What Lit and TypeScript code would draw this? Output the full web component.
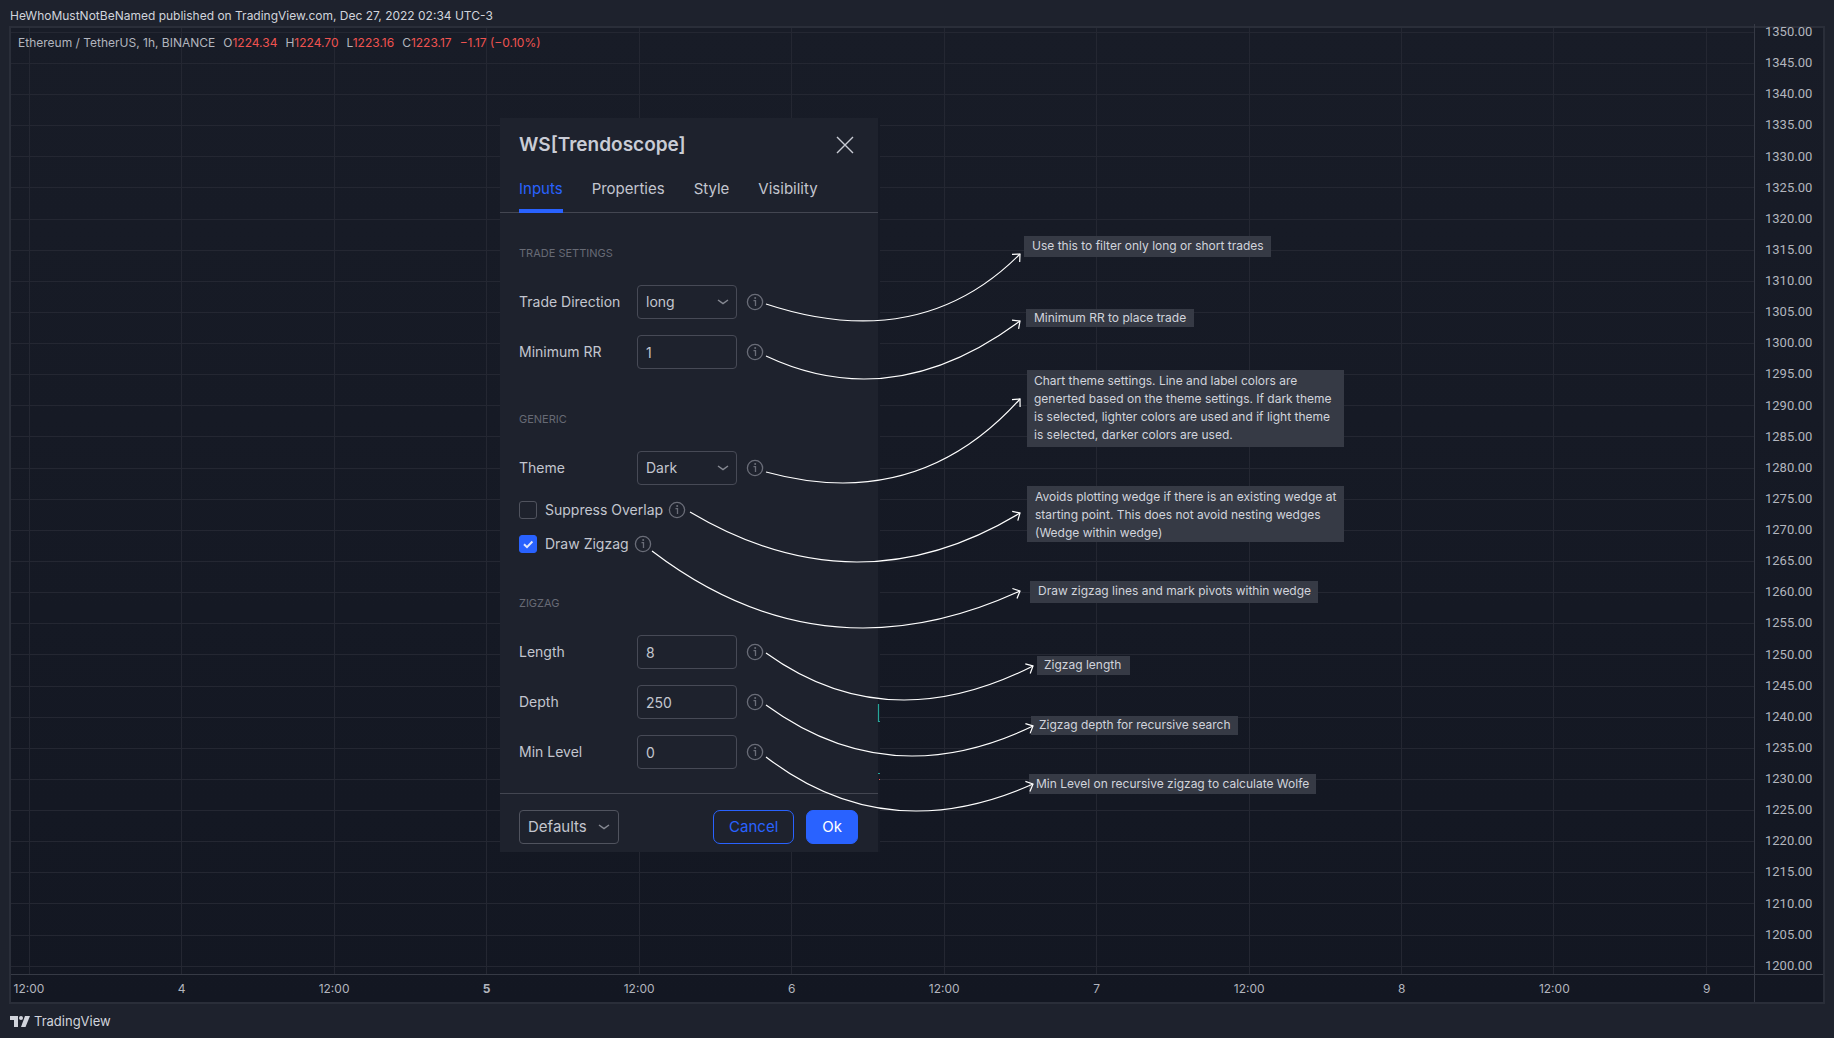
import { LitElement, html, svg, css } from "lit";
import { customElement } from "lit/decorators.js";
import { classMap } from "lit/directives/class-map.js";

type Point = [number, number];

/** Price levels, top to bottom, and times, left to right. */
const PRICES = Array.from({ length: 31 }, (_, i) => 1350 - i * 5);
const TIMES = ["12:00", "4", "12:00", "5", "12:00", "6", "12:00", "7", "12:00", "8", "12:00", "9"];

/** Callout arrows: start, lowest point of the arc, tip. */
const ARROWS: [Point, Point, Point][] = [
  [[766, 304], [863, 321], [1020, 254]],
  [[766, 356], [864, 379], [1020, 321]],
  [[766, 472], [843, 483], [1020, 399]],
  [[690, 512], [857, 562], [1020, 513]],
  [[652, 551], [863, 628], [1020, 591]],
  [[766, 653], [904, 700], [1033, 666]],
  [[766, 705], [912, 756], [1033, 726]],
  [[766, 757], [916, 811], [1033, 784]],
];

interface Note {
  x: number;
  y: number;
  w: number;
  h: number;
  padLeft: number;
  padTop: number;
  lines: string[];
}

const NOTES: Note[] = [
  { x: 1024, y: 236, w: 247, h: 21, padLeft: 8, padTop: 1, lines: ["Use this to filter only long or short trades"] },
  { x: 1026, y: 309, w: 168, h: 18, padLeft: 8, padTop: 0, lines: ["Minimum RR to place trade"] },
  {
    x: 1027, y: 370, w: 317, h: 77, padLeft: 7, padTop: 2,
    lines: [
      "Chart theme settings. Line and label colors are",
      "generted based on the theme settings. If dark theme",
      "is selected, lighter colors are used and if light theme",
      "is selected, darker colors are used.",
    ],
  },
  {
    x: 1027, y: 486, w: 317, h: 56, padLeft: 8, padTop: 2,
    lines: [
      "Avoids plotting wedge if there is an existing wedge at",
      "starting point. This does not avoid nesting wedges",
      "(Wedge within wedge)",
    ],
  },
  { x: 1030, y: 581, w: 288, h: 22, padLeft: 8, padTop: 1, lines: ["Draw zigzag lines and mark pivots within wedge"] },
  { x: 1037, y: 656, w: 93, h: 19, padLeft: 7, padTop: 0, lines: ["Zigzag length"] },
  { x: 1031, y: 716, w: 207, h: 19, padLeft: 8, padTop: 0, lines: ["Zigzag depth for recursive search"] },
  { x: 1029, y: 774, w: 287, h: 20, padLeft: 7, padTop: 1, lines: ["Min Level on recursive zigzag to calculate Wolfe"] },
];

/** Control point of the quadratic curve whose lowest point is `low`. */
function control([x0, y0]: Point, [lx, ly]: Point, [x2, y2]: Point): Point {
  const cy = ly + Math.sqrt((ly - y0) * (ly - y2));
  const t = (cy - y0) / (2 * cy - y0 - y2);
  const cx = (lx - (1 - t) ** 2 * x0 - t * t * x2) / (2 * t * (1 - t));
  return [cx, cy];
}

function arrow(a: Point, low: Point, b: Point) {
  const [cx, cy] = control(a, low, b);
  const angle = Math.atan2(b[1] - cy, b[0] - cx);
  const arm = (turn: number) => {
    const d = angle + Math.PI + turn;
    return `${(b[0] + 8 * Math.cos(d)).toFixed(1)} ${(b[1] + 8 * Math.sin(d)).toFixed(1)}`;
  };
  return svg`
    <path d="M${a[0]} ${a[1]}Q${cx.toFixed(1)} ${cy.toFixed(1)} ${b[0]} ${b[1]}"></path>
    <path d="M${arm(0.75)}L${b[0]} ${b[1]}L${arm(-0.75)}"></path>`;
}

const chevron = html`<svg class="chevron" width="12" height="6" viewBox="0 0 12 6" aria-hidden="true">
  <path d="M1 1l5 3.600L11 1" fill="none" stroke="currentColor" stroke-width="1.500"></path>
</svg>`;

const info = html`<svg class="info" width="18" height="18" viewBox="0 0 18 18" aria-hidden="true">
  <circle cx="9" cy="9" r="7.600" fill="none" stroke="currentColor" stroke-width="1.300"></circle>
  <path d="M7.500 7.600H9.500V13" fill="none" stroke="currentColor" stroke-width="1.300"></path>
  <circle cx="9.200" cy="5" r="1" fill="currentColor"></circle>
</svg>`;

@customElement("settings-dialog")
export class SettingsDialog extends LitElement {
  static styles = css`
    :host {
      display: block;
      background: #1e222d;
      color: #c3c6cf;
      font-family: Inter, "Liberation Sans", sans-serif;
      font-size: 14px;
      line-height: 16px;
    }
    button, input, select {
      font: inherit;
      color: inherit;
      margin: 0;
      box-sizing: border-box;
    }
    .head {
      display: flex;
      justify-content: space-between;
      align-items: center;
      padding: 15px 21px 15px 19px;
    }
    .title {
      margin: 0;
      font-size: 19px;
      line-height: 24px;
      font-weight: 600;
      color: #c9ccd5;
    }
    .close {
      display: flex;
      padding: 0;
      border: 0;
      background: none;
    }
    .tabs {
      display: flex;
      gap: 29px;
      padding: 0 19px;
      border-bottom: 1px solid #434651;
    }
    .tab {
      border: 0;
      border-bottom: 4px solid transparent;
      margin-bottom: -1px;
      padding: 4px 0 7px;
      background: none;
      font-size: 15px;
      line-height: 26px;
    }
    .tab.active {
      color: #2962ff;
      border-bottom-color: #2962ff;
    }
    .body {
      display: flex;
      flex-direction: column;
      gap: 42px;
      padding: 32px 19px 24px;
    }
    .section {
      display: flex;
      flex-direction: column;
      gap: 16px;
    }
    .caption {
      margin: 0 0 8px;
      font-size: 11px;
      font-weight: 400;
      line-height: 16px;
      color: #676a75;
    }
    .row {
      display: grid;
      grid-template-columns: 118px 100px 18px;
      align-items: center;
    }
    .row .info {
      margin-left: 9px;
    }
    .field {
      position: relative;
      display: flex;
    }
    .box {
      width: 100%;
      height: 34px;
      padding: 0 8px;
      border: 1px solid #474a56;
      border-radius: 4px;
      background: transparent;
      appearance: none;
      outline: 0;
    }
    .field .chevron {
      position: absolute;
      right: 8px;
      top: 14px;
      pointer-events: none;
    }
    .chevron {
      color: #868993;
    }
    .info {
      color: #6a6d78;
    }
    .check {
      display: flex;
      align-items: center;
      height: 18px;
    }
    .check label {
      margin: 0 5px 0 8px;
    }
    .tick {
      width: 18px;
      height: 18px;
      border: 1px solid #50535e;
      border-radius: 3px;
      appearance: none;
    }
    .tick:checked {
      border-color: #2962ff;
      background: #2962ff;
    }
    .mark {
      position: relative;
      display: flex;
    }
    .mark svg {
      position: absolute;
      inset: 0;
      pointer-events: none;
    }
    .foot {
      display: flex;
      gap: 12px;
      padding: 16px 20px 8px 19px;
      border-top: 1px solid #434651;
      font-size: 15px;
    }
    .btn {
      height: 34px;
      padding: 0 15px;
      border: 1px solid #2962ff;
      border-radius: 7px;
      background: none;
      color: #2962ff;
    }
    .btn.solid {
      background: #2962ff;
      color: #fff;
    }
    .btn.menu {
      display: flex;
      align-items: center;
      gap: 11px;
      margin-right: auto;
      padding: 0 8px;
      border-color: #50535e;
      border-radius: 4px;
      color: #c3c6cf;
    }
  `;

  private row(id: string, name: string, field: unknown) {
    return html`<div class="row">
      <label for=${id}>${name}</label>
      <div class="field">${field}</div>
      ${info}
    </div>`;
  }

  private number(id: string, name: string, value: string) {
    return this.row(id, name, html`<input class="box" id=${id} type="text" inputmode="numeric" .value=${value} />`);
  }

  private choice(id: string, name: string, value: string) {
    return this.row(id, name, html`<select class="box" id=${id}><option>${value}</option></select>${chevron}`);
  }

  private check(id: string, name: string, on: boolean) {
    return html`<div class="check">
      <span class="mark">
        <input class="tick" id=${id} type="checkbox" .checked=${on} />
        ${on
          ? html`<svg width="18" height="18" viewBox="0 0 18 18" aria-hidden="true">
              <path d="M5 9.200l3 2.900 5.400-5.600" fill="none" stroke="#e3e9fb" stroke-width="2"></path>
            </svg>`
          : null}
      </span>
      <label for=${id}>${name}</label>
      ${info}
    </div>`;
  }

  render() {
    return html`
      <div class="head">
        <h2 class="title">WS[Trendoscope]</h2>
        <button class="close" aria-label="Close">
          <svg width="24" height="24" viewBox="0 0 24 24" aria-hidden="true">
            <path d="M4 4L20 20M20 4L4 20" stroke="#c9ccd5" stroke-width="1.400"></path>
          </svg>
        </button>
      </div>
      <nav class="tabs">
        ${["Inputs", "Properties", "Style", "Visibility"].map(
          (t, i) => html`<button class=${classMap({ tab: true, active: i === 0 })}>${t}</button>`
        )}
      </nav>
      <div class="body">
        <section class="section">
          <h3 class="caption">TRADE SETTINGS</h3>
          ${this.choice("direction", "Trade Direction", "long")} ${this.number("rr", "Minimum RR", "1")}
        </section>
        <section class="section">
          <h3 class="caption">GENERIC</h3>
          ${this.choice("theme", "Theme", "Dark")} ${this.check("overlap", "Suppress Overlap", false)}
          ${this.check("draw", "Draw Zigzag", true)}
        </section>
        <section class="section">
          <h3 class="caption">ZIGZAG</h3>
          ${this.number("length", "Length", "8")} ${this.number("depth", "Depth", "250")}
          ${this.number("level", "Min Level", "0")}
        </section>
      </div>
      <div class="foot">
        <button class="btn menu">Defaults ${chevron}</button>
        <button class="btn">Cancel</button>
        <button class="btn solid">Ok</button>
      </div>
    `;
  }
}

@customElement("app-root")
export class AppRoot extends LitElement {
  static styles = css`
    :host {
      position: relative;
      display: flex;
      flex-direction: column;
      box-sizing: border-box;
      height: 100vh;
      overflow: hidden;
      background: #1e222d;
      color: #b2b5be;
      font-family: Inter, "Liberation Sans", sans-serif;
      font-size: 12px;
      line-height: 16px;
    }
    .top {
      padding: 8px 10px 2px;
      color: #d1d4dc;
    }
    .frame {
      flex: 1;
      min-height: 0;
      display: grid;
      grid-template-columns: 1fr 69px;
      grid-template-rows: 1fr 28px;
      margin: 0 9px;
      border: 2px solid #2a2e39;
      background: linear-gradient(#181c27, #131722);
    }
    .plot {
      position: relative;
      min-height: 0;
    }
    .grid {
      position: absolute;
      inset: 0;
      width: 100%;
      height: 100%;
    }
    .grid line {
      stroke: #242732;
      shape-rendering: crispEdges;
    }
    .legend {
      position: relative;
      display: flex;
      gap: 8px;
      padding: 6px 7px;
      line-height: 18px;
    }
    .down {
      color: #ef5350;
    }
    .prices {
      display: flex;
      flex-direction: column;
      justify-content: space-between;
      min-height: 0;
      margin-top: -4px;
      border-left: 1px solid #363a45;
      padding-left: 10px;
      font-family: Roboto, "Liberation Sans", sans-serif;
      font-size: 13px;
    }
    .times {
      display: flex;
      justify-content: space-between;
      align-items: center;
      border-top: 1px solid #363a45;
      padding-right: 29px;
    }
    .time {
      width: 36px;
      text-align: center;
    }
    .strong {
      font-weight: 700;
    }
    .corner {
      border-top: 1px solid #363a45;
      border-left: 1px solid #363a45;
    }
    .bottom {
      display: flex;
      align-items: center;
      gap: 4px;
      height: 34px;
      padding: 0 10px;
      color: #d1d4dc;
    }
    .brand {
      font-size: 13px;
    }
    .dialog {
      position: absolute;
      left: 500px;
      top: 118px;
      width: 378px;
      box-shadow: 2px 0 #161a25;
    }
    .links {
      position: absolute;
      left: 0;
      top: 0;
      width: 100%;
      height: 100%;
      pointer-events: none;
      fill: none;
      stroke: #fff;
      stroke-width: 1.2;
    }
    .note {
      position: absolute;
      display: flex;
      flex-direction: column;
      box-sizing: border-box;
      background: #363a45;
      color: #d1d4dc;
      line-height: 18px;
      white-space: nowrap;
    }
  `;

  private quote(key: string, value: string) {
    return html`<span>${key}<span class="down">${value}</span></span>`;
  }

  render() {
    return html`
      <header class="top">HeWhoMustNotBeNamed published on TradingView.com, Dec 27, 2022 02:34 UTC-3</header>
      <main class="frame">
        <div class="plot">
          <svg class="grid" aria-hidden="true">
            ${PRICES.map((_, i) => {
              const y = `${0.45 + (i * 98.73) / 30}%`;
              return svg`<line x1="0" x2="100%" y1=${y} y2=${y}></line>`;
            })}
            ${TIMES.map((_, i) => {
              const x = `${1.06 + (i * 96.21) / 11}%`;
              return svg`<line y1="0" y2="100%" x1=${x} x2=${x}></line>`;
            })}
          </svg>
          <div class="legend">
            <span>Ethereum / TetherUS, 1h, BINANCE</span>
            ${this.quote("O", "1224.34")} ${this.quote("H", "1224.70")} ${this.quote("L", "1223.16")}
            ${this.quote("C", "1223.17")}
            <span class="down">−1.17 (−0.10%)</span>
          </div>
        </div>
        <div class="prices">${PRICES.map((p) => html`<span>${p.toFixed(2)}</span>`)}</div>
        <div class="times">
          ${TIMES.map((t) => html`<span class=${classMap({ time: true, strong: t === "5" })}>${t}</span>`)}
        </div>
        <div class="corner"></div>
      </main>
      <footer class="bottom">
        <svg width="20" height="11" viewBox="0 0 20 11" fill="#d1d4dc" aria-hidden="true">
          <path d="M0 0H8V11H4V4H0Z"></path>
          <circle cx="11" cy="2" r="2"></circle>
          <path d="M15 0H20L15.500 11H11Z"></path>
        </svg>
        <span class="brand">TradingView</span>
      </footer>
      <settings-dialog class="dialog"></settings-dialog>
      ${NOTES.map(
        (n) => html`<div
          class="note"
          style="left:${n.x}px;top:${n.y}px;width:${n.w}px;height:${n.h}px;padding:${n.padTop}px 0 0 ${n.padLeft}px"
        >
          ${n.lines.map((l) => html`<span>${l}</span>`)}
        </div>`
      )}
      <svg class="links" aria-hidden="true">
        <path d="M878.500 704V721.500H880" stroke="#26a69a"></path>
        <path d="M878 773.500H880" stroke="#26a69a"></path>
        <path d="M879 779.500H880" stroke="#ef5350"></path>
        ${ARROWS.map(([a, low, b]) => arrow(a, low, b))}
      </svg>
    `;
  }
}
